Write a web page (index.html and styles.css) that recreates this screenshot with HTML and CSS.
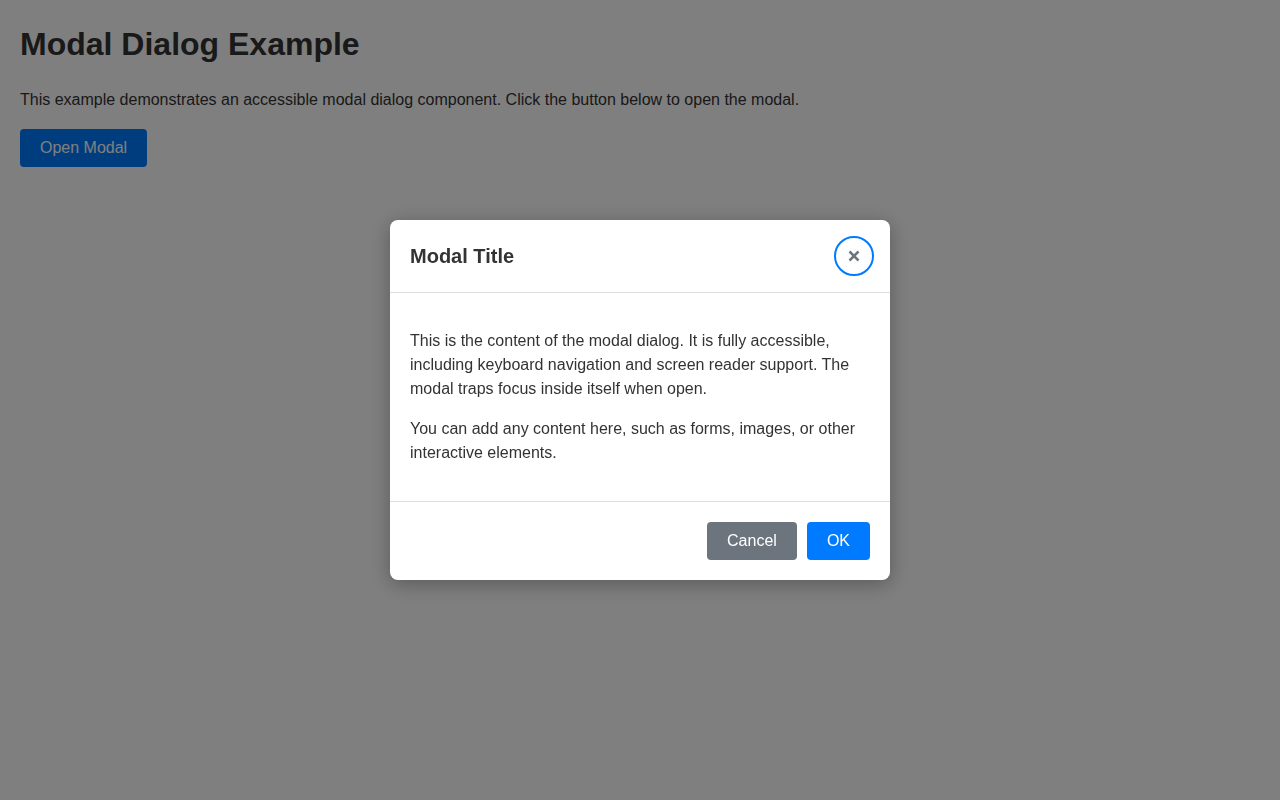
FILE: index.html
```html
<!DOCTYPE html>
<html lang="en">
<head>
<meta charset="utf-8">
<title>Modal Dialog Example</title>
<link rel="stylesheet" href="styles.css">
</head>
<body>
<main class="page">
  <h1 class="page-title">Modal Dialog Example</h1>
  <p class="page-text">This example demonstrates an accessible modal dialog component. Click the button below to open the modal.</p>
  <button class="btn btn-primary" type="button">Open Modal</button>
</main>
<div class="overlay">
  <div class="modal" role="dialog" aria-modal="true" aria-labelledby="modal-title">
    <div class="modal-header">
      <h2 class="modal-title" id="modal-title">Modal Title</h2>
      <button class="close-btn" type="button" aria-label="Close">
        <svg width="12" height="12" viewBox="0 0 12 12" aria-hidden="true"><path d="M1.5 1.5 L10.5 10.5 M10.5 1.5 L1.5 10.5" stroke="#6c757d" stroke-width="2.5"/></svg>
      </button>
    </div>
    <div class="modal-body">
      <p>This is the content of the modal dialog. It is fully accessible, including keyboard navigation and screen reader support. The modal traps focus inside itself when open.</p>
      <p>You can add any content here, such as forms, images, or other interactive elements.</p>
    </div>
    <div class="modal-footer">
      <button class="btn btn-secondary" type="button">Cancel</button>
      <button class="btn btn-primary" type="button">OK</button>
    </div>
  </div>
</div>
</body>
</html>
```
FILE: styles.css
```css
html, body {
  margin: 0;
  padding: 0;
}
body {
  font-family: "Liberation Sans", Arial, Helvetica, sans-serif;
  font-size: 16px;
  line-height: 1.5;
  color: #333;
  background: #fff;
}
.page {
  padding: 20px;
}
.page-title {
  font-size: 32px;
  font-weight: bold;
  margin: 0 0 20px;
  line-height: 1.5;
}
.page-text {
  margin: 0 0 17px;
}
.btn {
  font-family: "Liberation Sans", Arial, Helvetica, sans-serif;
  font-size: 16px;
  line-height: normal;
  padding: 10px 20px;
  border: none;
  border-radius: 4px;
  color: #fff;
  cursor: pointer;
}
.btn-primary {
  background: #007bff;
}
.btn-secondary {
  background: #6c757d;
}
.overlay {
  position: fixed;
  inset: 0;
  background: rgba(0, 0, 0, 0.5);
  display: flex;
  align-items: center;
  justify-content: center;
}
.modal {
  width: 500px;
  background: #fff;
  border-radius: 8px;
  box-shadow: 0 4px 20px rgba(0, 0, 0, 0.3);
  overflow: hidden;
}
.modal-header {
  display: flex;
  align-items: center;
  justify-content: space-between;
  padding: 16px 16px 16px 20px;
  border-bottom: 1px solid #ddd;
}
.modal-title {
  margin: 0;
  font-size: 20px;
  font-weight: bold;
  line-height: 1.2;
  color: #333;
}
.close-btn {
  width: 40px;
  height: 40px;
  border-radius: 50%;
  border: 2px solid #007bff;
  background: transparent;
  display: flex;
  align-items: center;
  justify-content: center;
  padding: 0;
  cursor: pointer;
}
.modal-body {
  padding: 20px;
}
.modal-body p {
  margin: 16px 0;
}
.modal-footer {
  display: flex;
  justify-content: flex-end;
  gap: 10px;
  padding: 20px;
  border-top: 1px solid #ddd;
}
```
